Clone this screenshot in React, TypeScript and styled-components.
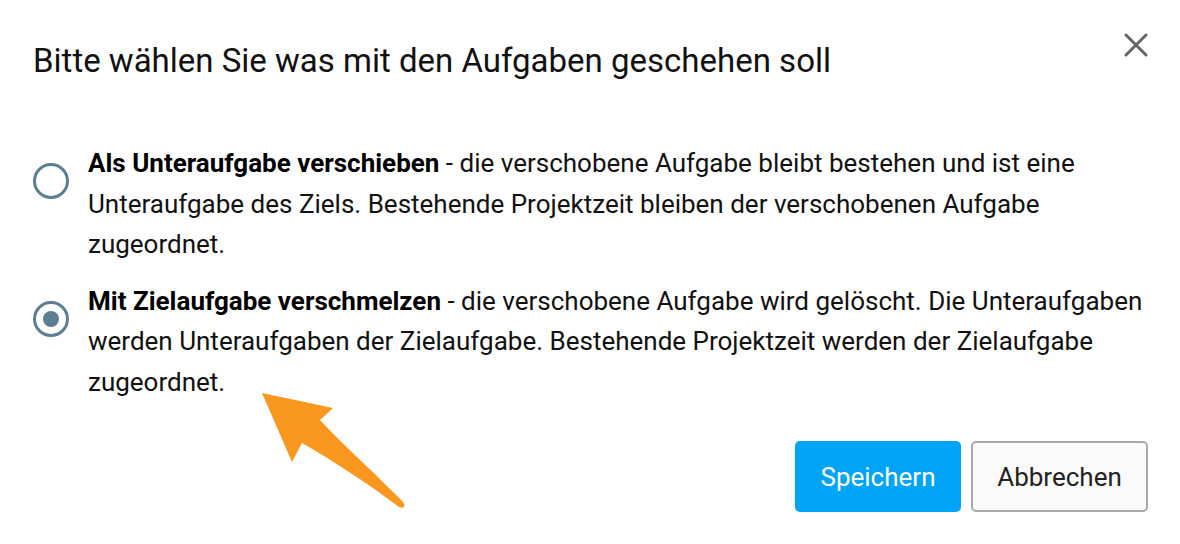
import React, { useState } from "react";
import styled, { createGlobalStyle } from "styled-components";

const GlobalStyle = createGlobalStyle`
  html, body {
    margin: 0;
    padding: 0;
    background: #ffffff;
  }
  body {
    font-family: Roboto, "Liberation Sans", Arial, sans-serif;
    color: #111;
  }
`;

const options = [
  {
    title: "Als Unteraufgabe verschieben",
    text:
      " - die verschobene Aufgabe bleibt bestehen und ist eine Unteraufgabe des Ziels. Bestehende Projektzeit bleiben der verschobenen Aufgabe zugeordnet.",
  },
  {
    title: "Mit Zielaufgabe verschmelzen",
    text:
      " - die verschobene Aufgabe wird gelöscht. Die Unteraufgaben werden Unteraufgaben der Zielaufgabe. Bestehende Projektzeit werden der Zielaufgabe zugeordnet.",
  },
];

export default function App() {
  const [selected, setSelected] = useState(1);

  return (
    <>
      <GlobalStyle />
      <Dialog>
        <Header>
          <Title>Bitte wählen Sie was mit den Aufgaben geschehen soll</Title>
          <CloseButton aria-label="Schließen">
            <svg width="24" height="24" viewBox="0 0 24 24">
              <path
                d="M2 2 L22 22 M22 2 L2 22"
                stroke="#666"
                strokeWidth="3"
                strokeLinecap="round"
              />
            </svg>
          </CloseButton>
        </Header>

        <OptionList>
          {options.map((opt, i) => (
            <Option key={i} onClick={() => setSelected(i)}>
              <Radio checked={selected === i} />
              <OptionText>
                <b>{opt.title}</b>
                {opt.text}
              </OptionText>
            </Option>
          ))}
        </OptionList>

        <Footer>
          <PrimaryButton>Speichern</PrimaryButton>
          <SecondaryButton>Abbrechen</SecondaryButton>
        </Footer>

        <Arrow width="160" height="130" viewBox="0 0 160 130">
          <path
            d="M2 3 L73 18 L60 30 C80 52 120 88 143 112 C146 116 144 119 139 117 C110 95 72 70 42 53 L32 72 Z"
            fill="#fa971e"
          />
        </Arrow>
      </Dialog>
    </>
  );
}

const Dialog = styled.div`
  position: relative;
  width: 1180px;
  height: 544px;
  box-sizing: border-box;
  padding: 26px 32px 0 33px;
  background: #fff;
`;

const Header = styled.div`
  display: flex;
  align-items: flex-start;
  justify-content: space-between;
`;

const Title = styled.h1`
  margin: 0;
  font-size: 33px;
  font-weight: 400;
  line-height: 70px;
  color: #111;
`;

const CloseButton = styled.button`
  border: none;
  background: none;
  padding: 0;
  margin-top: 7px;
  width: 24px;
  height: 24px;
  display: flex;
  cursor: pointer;
`;

const OptionList = styled.div`
  display: flex;
  flex-direction: column;
  gap: 16px;
  margin-top: 47px;
`;

const Option = styled.label`
  display: flex;
  align-items: flex-start;
  gap: 19px;
  cursor: pointer;
`;

const Radio = styled.span<{ checked: boolean }>`
  flex: none;
  margin-top: 20px;
  width: 36px;
  height: 36px;
  box-sizing: border-box;
  border-radius: 50%;
  border: 3.5px solid #5b7f90;
  display: flex;
  align-items: center;
  justify-content: center;
  &::after {
    content: "";
    width: 16px;
    height: 16px;
    border-radius: 50%;
    background: #5b7f90;
    display: ${(p) => (p.checked ? "block" : "none")};
  }
`;

const OptionText = styled.p`
  margin: 0;
  font-size: 26px;
  line-height: 40.5px;
  color: #111;
  max-width: 1060px;
  b {
    font-weight: 700;
    color: #000;
  }
`;

const Footer = styled.div`
  display: flex;
  justify-content: flex-end;
  gap: 10px;
  margin-top: 39px;
`;

const BaseButton = styled.button`
  height: 71px;
  border-radius: 5px;
  font-family: Roboto, "Liberation Sans", Arial, sans-serif;
  font-size: 26px;
  cursor: pointer;
`;

const PrimaryButton = styled(BaseButton)`
  width: 166px;
  border: none;
  background: #00a4f7;
  color: #fff;
`;

const SecondaryButton = styled(BaseButton)`
  width: 177px;
  border: 2px solid #a9a9a9;
  background: #fafafa;
  color: #222;
`;

const Arrow = styled.svg`
  position: absolute;
  left: 260px;
  top: 390px;
`;
